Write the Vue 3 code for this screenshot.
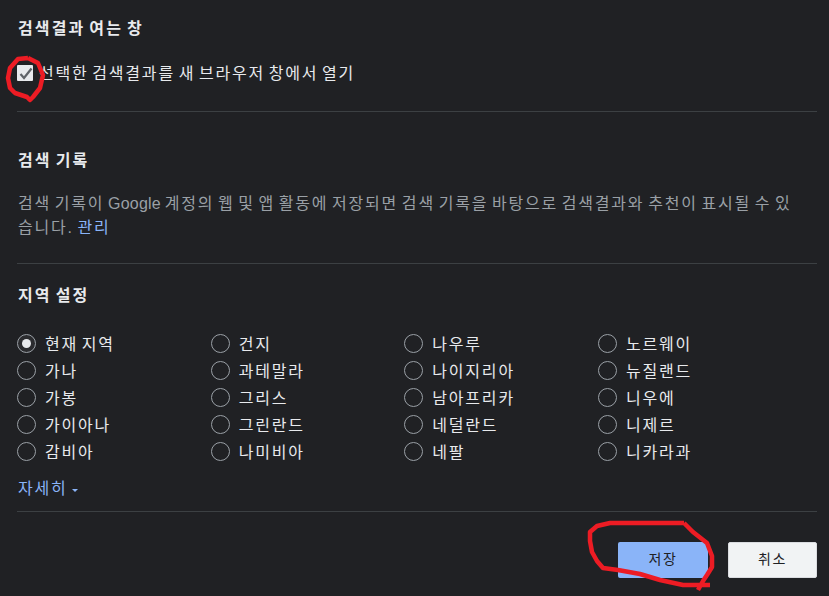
<script setup>
const regions = [
  ['현재 지역','건지','나우루','노르웨이'],
  ['가나','과테말라','나이지리아','뉴질랜드'],
  ['가봉','그리스','남아프리카','니우에'],
  ['가이아나','그린란드','네덜란드','니제르'],
  ['감비아','나미비아','네팔','니카라과'],
].flat()
</script>

<template>
  <div class="page">
    <section class="sec first">
      <h2>검색결과 여는 창</h2>
      <label class="check">
        <span class="box">
          <svg width="20" height="20" viewBox="0 0 20 20"><path d="M3.5 9 L7 13 L14.5 3.5" fill="none" stroke="#5f6368" stroke-width="2.2"/></svg>
        </span>
        <span class="lbl">선택한 검색결과를 새 브라우저 창에서 열기</span>
      </label>
    </section>
    <section class="sec second">
      <h2>검색 기록</h2>
      <p>검색 기록이 <span class="latin">Google</span> 계정의 웹 및 앱 활동에 저장되면 검색 기록을 바탕으로 검색결과와 추천이 표시될 수 있습니다. <a>관리</a></p>
    </section>
    <section class="third">
      <h2>지역 설정</h2>
      <div class="grid">
        <div v-for="(r, i) in regions" :key="r" class="radio">
          <span class="dot" :class="{ on: i === 0 }"></span>
          <span class="rt">{{ r }}</span>
        </div>
      </div>
      <a class="more">자세히<i class="caret"></i></a>
    </section>
    <div class="actions">
      <button class="save">저장</button>
      <button class="cancel">취소</button>
    </div>
    <svg class="ink" width="829" height="596" viewBox="0 0 829 596">
      <path d="M28 58 L18 59 L10 68 L8 78 L10 88 L15 93 L27 97 L30 100 L33 97 L40 88 L43 75 L38 63 L28 58" />
      <path d="M684 523 L610 523 L597 526 L590 532 L590 541 L592 552 L597 561 L603 568 L618 570 L640 574 L660 580 L683 585 L710 585 M698 590 L703 581 L707 575 L712 567 L712 556 L707 543 L693 532 L684 523" />
    </svg>
  </div>
</template>

<style scoped>
.page {
  position: relative;
  width: 829px;
  height: 596px;
  background: #202124;
  color: #e8eaed;
  font-family: "Liberation Sans", "Noto Sans CJK KR", sans-serif;
  font-size: 16px;
  letter-spacing: 1.8px;
  word-spacing: -2.5px;
  overflow: hidden;
  box-sizing: border-box;
  padding: 0 12px 0 17px;
}
h2 { margin: 0; padding-left: 1px; font-size: 16px; font-weight: 700; line-height: 20px; color: #e8eaed; letter-spacing: 2.1px; }
.sec { border-bottom: 1px solid #3c4043; }
.first { height: 112px; box-sizing: border-box; padding-top: 19px; }
.check { display: flex; align-items: center; gap: 5px; margin-top: 22px; line-height: 20px; }
.lbl { padding-top: 3px; margin-left: 1px; }
.box { width: 16px; height: 16px; background: #e8eaed; border-radius: 1px; flex: none; display: block; }
.box svg { display: block; overflow: visible; }
.second { height: 152px; box-sizing: border-box; padding-top: 39px; }
.second p { margin: 21px 0 0; padding-left: 1px; color: #9aa0a6; line-height: 24px; font-size: 16px; width: 785px; word-break: break-all; }
.second a { color: #8ab4f8; }
.latin { letter-spacing: 0.2px; }
.third { padding-top: 22px; height: 248px; box-sizing: border-box; border-bottom: 1px solid #3c4043; }
.grid { display: grid; grid-template-columns: repeat(4, 193.67px); grid-auto-rows: 27px; margin-top: 24px; }
.radio { display: flex; align-items: center; gap: 9px; line-height: 27px; }
.rt { padding-top: 2px; line-height: 25px; }
.dot { width: 19px; height: 19px; box-sizing: border-box; border: 1px solid #9aa0a6; border-radius: 50%; flex: none; display: flex; align-items: center; justify-content: center; }
.dot.on { background: #2b2c2f; }
.dot.on::after { content: ""; width: 9px; height: 9px; border-radius: 50%; background: #e8eaed; }
.more { display: inline-flex; align-items: center; color: #8ab4f8; margin: 12px 0 0 1px; line-height: 24px; }
.caret { margin-left: 4px; margin-top: 3px; border-left: 3px solid transparent; border-right: 3px solid transparent; border-top: 3px solid #8ab4f8; }
.actions { display: flex; justify-content: flex-end; gap: 20px; margin-top: 30px; }
button { width: 90px; height: 36px; border-radius: 2px; font: inherit; font-size: 14px; letter-spacing: 1.5px; color: #202124; padding: 0 0 4px; }
.cancel { width: 89px; }
.save { background: #8ab4f8; border: 0; }
.cancel { background: #f1f3f4; border: 1px solid #dadce0; }
.ink { position: absolute; left: 0; top: 0; pointer-events: none; }
.ink path { fill: none; stroke: #ed1c24; stroke-width: 4.5; stroke-linejoin: round; }
</style>
